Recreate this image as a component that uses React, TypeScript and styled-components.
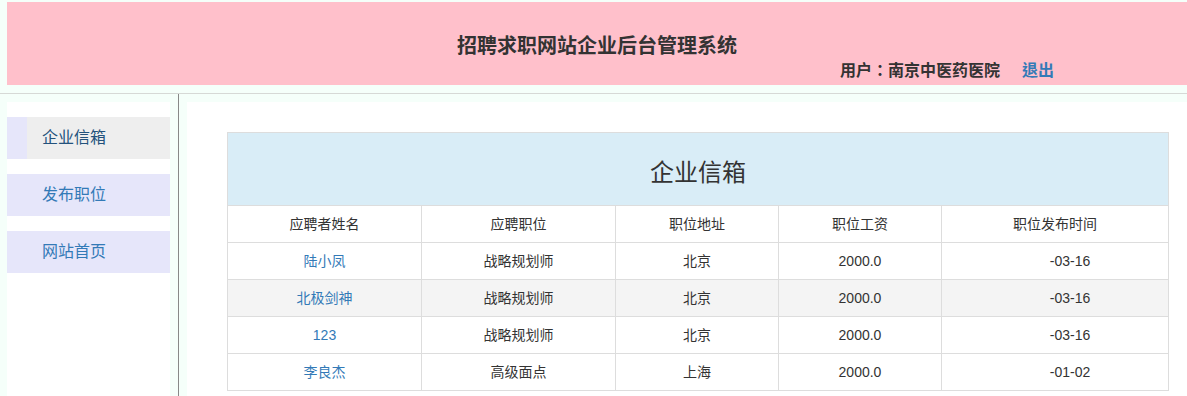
import React from "react"
import styled, { createGlobalStyle } from "styled-components"

const GlobalStyle = createGlobalStyle`
  html, body {
    margin: 0;
    padding: 0;
    background: #f5fffa;
    font-family: "Liberation Sans", "Noto Sans CJK SC", sans-serif;
    color: #333;
  }
`

type Row = { name: string; job: string; city: string; pay: string; date: string; shade?: boolean }

const rows: Row[] = [
  { name: "陆小凤", job: "战略规划师", city: "北京", pay: "2000.0", date: "-03-16" },
  { name: "北极剑神", job: "战略规划师", city: "北京", pay: "2000.0", date: "-03-16", shade: true },
  { name: "123", job: "战略规划师", city: "北京", pay: "2000.0", date: "-03-16" },
  { name: "李良杰", job: "高级面点", city: "上海", pay: "2000.0", date: "-01-02" },
]

const menu = ["企业信箱", "发布职位", "网站首页"]

const App = () => {
  return (
    <Page>
      <GlobalStyle />
      <Top>
        <Header>
          <SiteTitle>招聘求职网站企业后台管理系统</SiteTitle>
          <UserLine>
            <span>用户：南京中医药医院</span>
            <Logout>退出</Logout>
          </UserLine>
        </Header>
      </Top>
      <Body>
        <Side>
          <Menu>
            {menu.map((m, i) => (
              <MenuItem key={m} $active={i === 0}>
                {m}
              </MenuItem>
            ))}
          </Menu>
        </Side>
        <MainWrap>
          <Main>
            <Table>
              <colgroup>
                <col style={{ width: 194 }} />
                <col style={{ width: 194 }} />
                <col style={{ width: 163 }} />
                <col style={{ width: 163 }} />
                <col style={{ width: 227 }} />
              </colgroup>
              <thead>
                <tr>
                  <Caption colSpan={5}>企业信箱</Caption>
                </tr>
                <tr>
                  <Th>应聘者姓名</Th>
                  <Th>应聘职位</Th>
                  <Th>职位地址</Th>
                  <Th>职位工资</Th>
                  <Th>职位发布时间</Th>
                </tr>
              </thead>
              <tbody>
                {rows.map((r, i) => (
                  <Tr key={i} $shade={r.shade}>
                    <Td>
                      <NameLink>{r.name}</NameLink>
                    </Td>
                    <Td>{r.job}</Td>
                    <Td>{r.city}</Td>
                    <Td>{r.pay}</Td>
                    <DateTd>{r.date}</DateTd>
                  </Tr>
                ))}
              </tbody>
            </Table>
          </Main>
        </MainWrap>
      </Body>
    </Page>
  )
}

export default App

const Page = styled.div`
  display: flex;
  flex-direction: column;
  min-height: 100vh;
`
const Top = styled.div`
  padding: 2px 0 8px 7px;
  border-bottom: 1px solid #d6d9d6;
`
const Header = styled.header`
  height: 83px;
  background: #ffc0cb;
`
const SiteTitle = styled.h1`
  margin: 0;
  padding-top: 31px;
  font-size: 20px;
  line-height: 26px;
  font-weight: bold;
  text-align: center;
  color: #333;
`
const UserLine = styled.div`
  display: flex;
  gap: 22px;
  padding-left: 833px;
  font-family: "Liberation Sans", "Noto Sans CJK TC", sans-serif;
  font-size: 16px;
  line-height: 24px;
  font-weight: bold;
  color: #333;
`
const Logout = styled.a`
  color: #337ab7;
  cursor: pointer;
`
const Body = styled.div`
  flex: 1;
  display: flex;
`
const Side = styled.aside`
  width: 163px;
  padding: 8px 8px 0 7px;
  border-right: 1px solid #888;
  display: flex;
`
const Menu = styled.nav`
  flex: 1;
  background: #fff;
  padding-top: 15px;
  display: flex;
  flex-direction: column;
  gap: 15px;
`
const MenuItem = styled.a<{ $active?: boolean }>`
  display: block;
  height: 42px;
  line-height: 42px;
  font-size: 16px;
  cursor: pointer;
  box-sizing: border-box;
  padding-left: ${(p) => (p.$active ? "15px" : "35px")};
  border-left: ${(p) => (p.$active ? "20px solid #e6e6fa" : "none")};
  background: ${(p) => (p.$active ? "#eeeeee" : "#e6e6fa")};
  color: ${(p) => (p.$active ? "#23527c" : "#337ab7")};
`
const MainWrap = styled.div`
  flex: 1;
  padding: 8px 0 0 8px;
  display: flex;
`
const Main = styled.main`
  flex: 1;
  background: #fff;
  padding: 30px 0 0 40px;
`
const Table = styled.table`
  width: 941px;
  border-collapse: collapse;
  table-layout: fixed;
  font-size: 14px;
`
const Caption = styled.th`
  background: #d9edf7;
  border: 1px solid #ddd;
  font-size: 24px;
  font-weight: normal;
  line-height: 40px;
  padding: 20px 0 12px;
  color: #333;
`
const Th = styled.th`
  border: 1px solid #ddd;
  font-weight: normal;
  line-height: 20px;
  padding: 8px;
  text-align: center;
  color: #333;
`
const Tr = styled.tr<{ $shade?: boolean }>`
  background: ${(p) => (p.$shade ? "#f4f4f4" : "#fff")};
`
const Td = styled.td`
  border: 1px solid #ddd;
  line-height: 20px;
  padding: 8px;
  text-align: center;
  color: #333;
`
const DateTd = styled(Td)`
  padding-left: 38px;
`
const NameLink = styled.a`
  color: #337ab7;
  cursor: pointer;
`
